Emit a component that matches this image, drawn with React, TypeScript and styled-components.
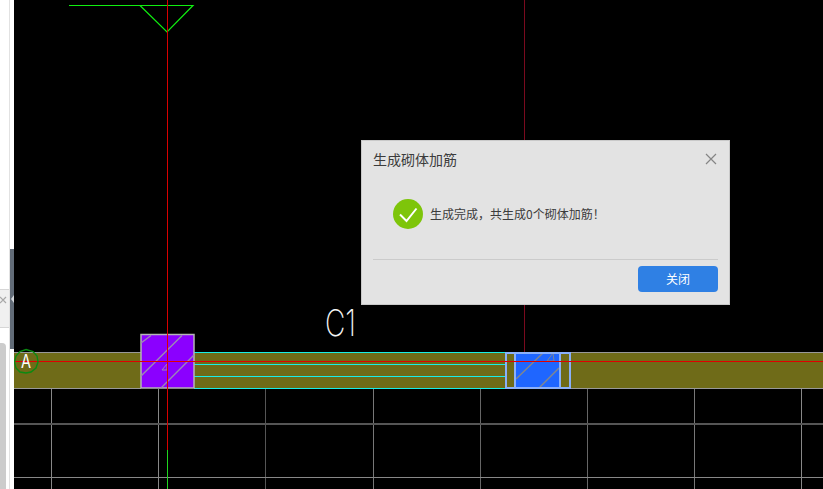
import React from "react";
import styled, { createGlobalStyle } from "styled-components";

const Global = createGlobalStyle`
  html, body { margin: 0; padding: 0; background: #fff; overflow: hidden; }
  #root { height: 100vh; }
`;

const Page = styled.div`
  display: flex;
  height: 100vh;
  font-family: "Noto Sans CJK SC", "Liberation Sans", sans-serif;
`;

const Sidebar = styled.aside`
  display: flex;
  flex: 0 0 14px;
  background: #fff;
`;

const PanelColumn = styled.div`
  display: flex;
  flex-direction: column;
  flex: 0 0 9px;
  overflow: hidden;
`;

const PanelBlank = styled.div<{ $h: number }>`
  flex: 0 0 ${(p) => p.$h}px;
`;

const ClippedTab = styled.div`
  flex: 0 0 39px;
  display: flex;
  align-items: flex-start;
  padding-top: 6px;
  box-sizing: border-box;
  background: #f0f0f0;
  border-top: 1px solid #d6d6d6;
  border-bottom: 1px solid #d6d6d6;
`;

const TabClose = styled.svg`
  flex: none;
  margin-left: -1px;
`;

const Scrollbar = styled.div`
  flex: 1;
  width: 6px;
  background: #cccccc;
  border-top-right-radius: 4px;
`;

const SideRule = styled.div`
  flex: 0 0 1px;
  background: #e2e2e2;
`;

const Gutter = styled.div`
  flex: 1;
  padding-top: 249px;
`;

const Splitter = styled.div`
  height: 100px;
  background: #626c78;
  display: flex;
  align-items: center;
  justify-content: flex-end;
`;

const SplitterArrow = styled.div`
  width: 0;
  height: 0;
  border-top: 4px solid transparent;
  border-bottom: 4px solid transparent;
  border-right: 3px solid #d3d6da;
`;

const Canvas = styled.main`
  position: relative;
  flex: 1;
  background: #000;
  overflow: hidden;
`;

const Drawing = styled.svg`
  position: absolute;
  inset: 0;
  display: block;
`;

const AxisLabel = styled.text`
  font-family: "Inter", "Liberation Sans", sans-serif;
  font-weight: 400;
  font-size: 18px;
  fill: #ffffff;
`;

const TagLabel = styled.text`
  font-family: "Inter", "Liberation Sans", sans-serif;
  font-weight: 200;
  font-size: 37px;
  fill: #f4f4f4;
`;

const Dialog = styled.section`
  position: absolute;
  left: 347px;
  top: 140px;
  width: 369px;
  height: 165px;
  box-sizing: border-box;
  display: flex;
  flex-direction: column;
  background: #e3e3e3;
  border: 1px solid #c9c9c9;
`;

const Header = styled.header`
  flex: 0 0 39px;
  box-sizing: border-box;
  display: flex;
  align-items: center;
  justify-content: space-between;
  padding: 0 12px 4px 11px;
`;

const Title = styled.h2`
  margin: 0;
  font-size: 14px;
  font-weight: 400;
  color: #3c3c3c;
`;

const CloseButton = styled.button`
  padding: 0;
  border: 0;
  background: none;
  display: flex;
`;

const Body = styled.div`
  flex: 0 0 79px;
  box-sizing: border-box;
  display: flex;
  align-items: center;
  gap: 7px;
  padding: 0 0 11px 31px;
`;

const Message = styled.p`
  margin: 0 0 2px;
  font-size: 12px;
  color: #3c3c3c;
`;

const Divider = styled.hr`
  flex: none;
  margin: 0 11px;
  border: 0;
  height: 1px;
  background: #cbcbcb;
`;

const Footer = styled.footer`
  display: flex;
  justify-content: flex-end;
  padding: 6px 11px 0;
`;

const PrimaryButton = styled.button`
  width: 80px;
  height: 26px;
  padding: 0 0 2px;
  border: 0;
  border-radius: 4px;
  background: #2f80e4;
  color: #fff;
  font-family: inherit;
  font-size: 12px;
`;

const GRID = [
  { x: 51, c: "#888" },
  { x: 158, c: "#888" },
  { x: 265, c: "#555" },
  { x: 373, c: "#777" },
  { x: 480, c: "#666" },
  { x: 587, c: "#666" },
  { x: 694, c: "#777" },
  { x: 801, c: "#888" },
];

const Line = ({ x1, y1, x2, y2, c, w = 1 }: { x1: number; y1: number; x2: number; y2: number; c: string; w?: number }) => (
  <line x1={x1} y1={y1} x2={x2} y2={y2} stroke={c} strokeWidth={w} />
);

const CadDrawing = () => (
  <Drawing width="809" height="489" viewBox="14 0 809 489">
    <g shapeRendering="crispEdges">
      {GRID.map((g) => (
        <Line key={g.x} x1={g.x + 0.5} y1={389} x2={g.x + 0.5} y2={489} c={g.c} />
      ))}
      <Line x1={14} y1={424} x2={823} y2={424} c="#555" w={2} />
      <Line x1={14} y1={477.5} x2={823} y2={477.5} c="#888" />
      <rect x={14} y={352} width={809} height={36} fill="#6f6b18" />
      <Line x1={14} y1={352.5} x2={141} y2={352.5} c="#999" />
      <Line x1={571} y1={352.5} x2={823} y2={352.5} c="#999" />
      <Line x1={14} y1={388.5} x2={141} y2={388.5} c="#999" />
      <Line x1={571} y1={388.5} x2={823} y2={388.5} c="#999" />
      {[352.5, 364.5, 376.5, 388.5].map((y) => (
        <Line key={y} x1={194} y1={y} x2={505} y2={y} c="#19eee8" />
      ))}
      <Line x1={524.5} y1={0} x2={524.5} y2={361} c="#7a0a1e" />
    </g>

    <rect x={141} y={334.5} width={53} height={53.5} fill="#8b00ff" stroke="#b5b5b5" strokeWidth="1.5" />
    <g stroke="#9c88b4" strokeWidth="1.4" fill="none">
      <path d="M141 343L151 335.5M141 376L182 335.5M161 388L194 355" />
      <path d="M162 370L167 364V370Z" strokeWidth="1" />
    </g>

    <rect x={516} y={352.5} width={44.5} height={35.5} fill="#1f66ff" />
    <g stroke="#80868f" strokeWidth="1.5" fill="none">
      <path d="M516 379L543 353M539 388L559 368" />
      <path d="M547 361L553 353L554 361Z" strokeWidth="1" />
    </g>
    <g shapeRendering="crispEdges" fill="none" stroke="#8ab0fa">
      <rect x={506} y={353} width={64} height={35} strokeWidth="2" />
      <Line x1={515} y1={352} x2={515} y2={389} c="#8ab0fa" w={2} />
      <Line x1={560} y1={352} x2={560} y2={389} c="#8ab0fa" w={2} />
    </g>

    <g fill="none" stroke="#10ee10" strokeWidth="1.2">
      <path d="M69 5.5H193L167 32L140 5.5" />
    </g>

    <g shapeRendering="crispEdges">
      <Line x1={14} y1={361.5} x2={823} y2={361.5} c="#e00000" />
      <Line x1={167.5} y1={0} x2={167.5} y2={450} c="#d80000" />
      <Line x1={167.5} y1={450} x2={167.5} y2={489} c="#1fd61f" />
    </g>

    <polygon
      points="26,349.5 33,351.5 37,356 38,362 36,368 31,372 26,373 20,372 16,368 14.5,362 16,356 20,351.5"
      fill="none"
      stroke="#0b8a12"
      strokeWidth="1.4"
    />
    <AxisLabel x={21} y={368} textLength={10} lengthAdjust="spacingAndGlyphs">A</AxisLabel>
    <TagLabel x={325} y={336} textLength={31} lengthAdjust="spacingAndGlyphs">C1</TagLabel>
  </Drawing>
);

export default function App() {
  return (
    <Page>
      <Global />
      <Sidebar>
        <PanelColumn>
          <PanelBlank $h={289} />
          <ClippedTab>
            <TabClose width="8" height="8" viewBox="0 0 8 8">
              <path d="M1 1L7 7M7 1L1 7" stroke="#a8a8a8" strokeWidth="1.2" />
            </TabClose>
          </ClippedTab>
          <PanelBlank $h={15} />
          <Scrollbar />
        </PanelColumn>
        <SideRule />
        <Gutter>
          <Splitter>
            <SplitterArrow />
          </Splitter>
        </Gutter>
      </Sidebar>
      <Canvas>
        <CadDrawing />
        <Dialog>
          <Header>
            <Title>生成砌体加筋</Title>
            <CloseButton aria-label="关闭">
              <svg width="12" height="12" viewBox="0 0 12 12">
                <path d="M1 1L11 11M11 1L1 11" stroke="#858585" strokeWidth="1.2" fill="none" />
              </svg>
            </CloseButton>
          </Header>
          <Body>
            <svg width="30" height="30" viewBox="0 0 30 30">
              <circle cx="15" cy="15" r="15" fill="#7ec50a" />
              <path d="M7 15.5L13.5 22L23.5 9.5" stroke="#fff" strokeWidth="2" fill="none" />
            </svg>
            <Message>生成完成，共生成0个砌体加筋！</Message>
          </Body>
          <Divider />
          <Footer>
            <PrimaryButton>关闭</PrimaryButton>
          </Footer>
        </Dialog>
      </Canvas>
    </Page>
  );
}
